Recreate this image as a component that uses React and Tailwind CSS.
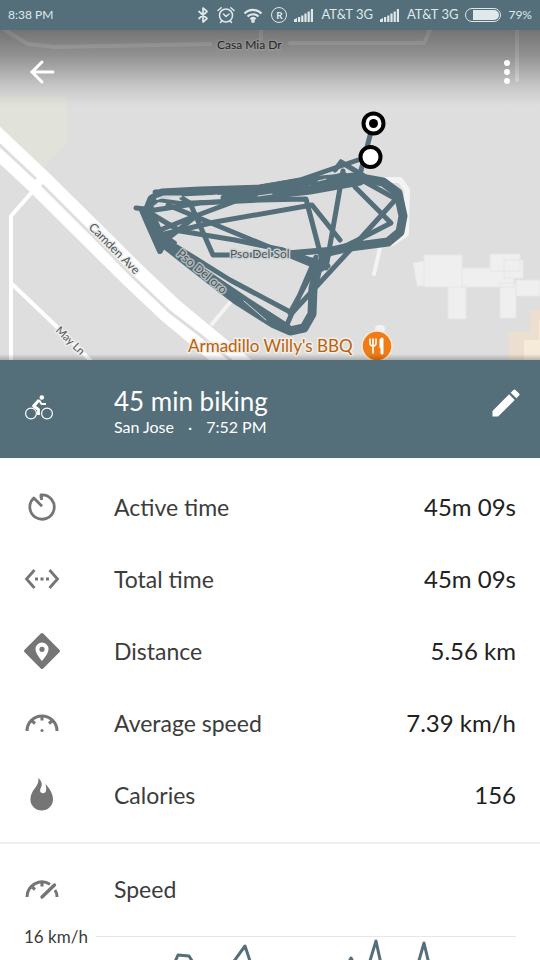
import React from "react";
import { MdEdit } from "react-icons/md";

function Signal() {
  return (
    <svg viewBox="0 0 20 14" className="h-[14px] w-5 shrink-0" fill="currentColor" aria-hidden="true">
      <path d="M0 14v-2.500l3-1.500v4zM4 14v-5h2.200v5zM7.200 14V7.500h2.200V14zM10.400 14V5.500h2.200V14zM13.600 14V3.500h2.200V14zM16.800 14V1H19v13z" />
    </svg>
  );
}

function StatusBar() {
  return (
    <header className="flex h-[30px] shrink-0 items-center justify-between bg-[#546e7a] px-2 text-[#dfe9ec]">
      <span className="text-xs">8:38 PM</span>
      <div className="flex items-center gap-[7px]">
        <div className="flex items-center gap-2">
          <svg viewBox="0 0 12 18" className="h-[18px] w-3" fill="none" stroke="currentColor" strokeWidth="1.700" strokeLinejoin="round" strokeLinecap="round" aria-hidden="true">
            <path d="M2 5.500 10 12.500 6 16V2l4 3.500L2 12.500" />
          </svg>
          <svg viewBox="0 0 18 18" className="size-[18px]" fill="none" stroke="currentColor" strokeWidth="1.500" strokeLinecap="round" aria-hidden="true">
            <circle cx="9" cy="9.500" r="6.500" />
            <path d="M1 4.500 4.200 1.800M17 4.500 13.800 1.800M6.500 8l2.500 2.500L12 8M4.800 15l-1.300 1.500M13.200 15l1.300 1.500" />
          </svg>
          <svg viewBox="0 0 20 16" className="h-4 w-5" fill="none" stroke="currentColor" strokeWidth="2.200" aria-hidden="true">
            <path d="M1.500 6.500a12 12 0 0 1 17 0M4.500 9.500a7.800 7.800 0 0 1 11 0M7.400 12.200a3.800 3.800 0 0 1 5.200 0" />
            <circle cx="10" cy="14" r=".8" fill="currentColor" />
          </svg>
          <span className="flex size-4 items-center justify-center rounded-full border border-current text-[10px] leading-none font-bold">R</span>
        </div>
        <Signal />
        <span className="text-[13px]">AT&amp;T 3G</span>
        <Signal />
        <span className="text-[13px]">AT&amp;T 3G</span>
        <span className="flex h-[14px] w-9 justify-end rounded-full border border-current p-px" role="img" aria-label="Battery">
          <span className="w-[26px] rounded-r-full bg-current" />
        </span>
        <span className="text-xs">79%</span>
      </div>
    </header>
  );
}

function RouteMap() {
  return (
    <svg viewBox="0 30 540 330" preserveAspectRatio="xMidYMid slice" className="h-full w-full" role="img" aria-label="Route map">
      <defs>
        <linearGradient id="shade" x1="0" y1="0" x2="0" y2="1">
          <stop offset="0" stopColor="#000" stopOpacity=".48" />
          <stop offset=".35" stopColor="#000" stopOpacity=".34" />
          <stop offset=".75" stopColor="#000" stopOpacity=".1" />
          <stop offset="1" stopColor="#000" stopOpacity="0" />
        </linearGradient>
        <linearGradient id="edge" x1="0" y1="0" x2="0" y2="1">
          <stop offset="0" stopColor="#000" stopOpacity="0" />
          <stop offset="1" stopColor="#000" stopOpacity=".22" />
        </linearGradient>
      </defs>
      <rect y="30" width="540" height="330" fill="#dedede" />
      <path d="M0 97h66v48l-22 22L0 128z" fill="#e1e2da" />

      <g fill="#efefef" stroke="#e6e6e6" strokeWidth="1">
        <path d="M413 263l12-2v25h-8z" />
        <path d="M448 286h18v33h-18zM500 283h16v35h-16zM462 268h52v19h-52zM516 280h24v16h-24z" />
        <path d="M424 255h38v32h-38zM490 254h30v17h-30zM504 260h19v18h-19z" />
      </g>
      <path d="M540 310h-10v22h-21v28h31z" fill="#ecdfd0" />
      <path d="M540 320h-1v20h-15v20h16z" fill="#f6ead8" />

      <g fill="none" stroke="#fff" strokeLinejoin="round">
        <path d="M-10 136 38 181 133 275 170 310 200 335 245 372" strokeWidth="27" />
        <path d="M32 192 11 216V365" strokeWidth="4" />
        <path d="M12 284 56 326 92 362" strokeWidth="4" />
      </g>
      <path d="M-10 136 36 179M42 185 96 239 133 277 170 312 200 335 240 368" fill="none" stroke="#dedede" strokeWidth="3" />
      <g fill="none" stroke="#f3f3f3" strokeLinecap="round">
        <path d="M232 300 212 324M380 248l-6 26" strokeWidth="4" />
        <path d="M372 180h28l7 10-1 44-14 9-32 2" strokeWidth="6" strokeLinejoin="round" />
        <path d="M379 329h2" strokeWidth="8" />
        <path d="M5 30 28 44 55 47 210 44M290 43h134l6-13M261 30v9M517 30v50" strokeWidth="4" />
      </g>

      <g fill="none" stroke="#546e7a" strokeLinejoin="round" strokeLinecap="round">
        <path d="M148 209 152 199 162 193 200 191 260 189 310 181 355 177 383 182 398 193 403 216 400 232 388 242 350 247 328 252 318 268 313 288 312 314 304 328 290 331 274 324 236 300 210 280 163 243z" strokeWidth="9" />
        <path d="M136 208 155 210 200 203 260 200 306 199 322 260" strokeWidth="5" />
        <path d="M225 198 250 197 310 190 360 181" strokeWidth="9" />
        <path d="M148 208 158 200 180 203 230 201" strokeWidth="4" />
        <path d="M155 192 250 189 300 180 358 160" strokeWidth="5" />
        <path d="M142 210 148 224 160 251 165 241" strokeWidth="6" />
        <path d="M146 212 152 224 165 236 175 243" strokeWidth="4" />
        <path d="M160 235 215 222 312 205 340 240" strokeWidth="5" />
        <path d="M182 198 190 203 213 255 265 255 325 251" strokeWidth="5" />
        <path d="M150 213 180 231 235 240 283 250 328 266" strokeWidth="5" />
        <path d="M168 205 175 208 240 235 322 269" strokeWidth="5" />
        <path d="M160 230 190 218 233 202M166 240 196 216" strokeWidth="5" />
        <path d="M177 247 230 280 292 313 350 250 396 199 360 179" strokeWidth="5" />
        <path d="M168 245 205 274 245 301 287 328" strokeWidth="9" />
        <path d="M355 178V187L391 223 350 244" strokeWidth="5" />
        <path d="M343 171 326 268 312 260M329 179 344 174M290 313 316 265M286 327 316 257" strokeWidth="5" />
        <path d="M341 162 364 176M341 162 335 170M373 124 358 182" strokeWidth="5" />
        <path d="M293 253 340 249 360 240" strokeWidth="6" />
      </g>
      <g fill="none" stroke="#d3dadd" strokeLinecap="round">
        <path d="M157 199 164 196.500 181 196.500" strokeWidth="2" />
        <path d="M154 206 162 205M205 196 217 195M258 196 272 194M318 181 326 179M244 301 266 320" strokeWidth="1" />
      </g>

      <g fontFamily="Lato, sans-serif" fontSize="12" fill="#555" stroke="#eee" strokeWidth="3" strokeLinejoin="round" paintOrder="stroke">
        <text x="217" y="49" fill="#444" stroke="#f0f0f0">Casa Mia Dr</text>
        <text x="230" y="258" stroke="#c8d0d3">Pso Del Sol</text>
        <text transform="translate(176 255) rotate(40)" stroke="#aebbc0">Pso Del oro</text>
        <text transform="translate(88 228) rotate(45)">Camden Ave</text>
        <text transform="translate(55 331) rotate(44)" fontSize="11">May Ln</text>
        <text x="188" y="352" fontSize="17" fill="#b8620f" stroke="#f4eee8">Armadillo Willy's BBQ</text>
      </g>

      <circle cx="377" cy="346" r="15" fill="#ef7c16" stroke="#fbe8d6" strokeWidth="1.500" />
      <g fill="none" stroke="#fff" strokeWidth="1.600" strokeLinecap="round">
        <path d="M370 339v4q0 3 3 3t3-3v-4M373 339v14" />
        <path d="M382 339v14M381 340v7" strokeWidth="3" />
      </g>
      <circle cx="370.500" cy="157" r="10" fill="#fff" stroke="#000" strokeWidth="4" />
      <circle cx="373.500" cy="123.500" r="10" fill="#fff" stroke="#000" strokeWidth="4" />
      <circle cx="373.500" cy="123.500" r="4.500" />

      <rect y="30" width="540" height="76" fill="url(#shade)" />
      <rect y="354" width="540" height="6" fill="url(#edge)" />
    </svg>
  );
}

function BikeIcon() {
  return (
    <svg viewBox="0 0 36 36" className="size-9" fill="none" stroke="currentColor" aria-hidden="true">
      <circle cx="7" cy="22.500" r="5.400" strokeWidth="1.200" />
      <circle cx="23" cy="22.500" r="5.400" strokeWidth="1.200" />
      <circle cx="17.800" cy="6.500" r="2.300" fill="currentColor" stroke="none" />
      <path d="m15 9-5.500 6 5 3.500v5.500" strokeWidth="2.800" strokeLinejoin="round" />
      <path d="m15 9 2.500 4H22M10 16l3-4" strokeWidth="2" strokeLinejoin="round" />
    </svg>
  );
}

function TimerIcon() {
  return (
    <svg viewBox="0 0 36 36" className="size-9" fill="none" stroke="currentColor" strokeWidth="2.800" aria-hidden="true">
      <path d="M17 9V5.800h1A12.200 12.200 0 1 1 9.800 9L18 17.200M17.500 5.800V11" strokeLinejoin="round" />
    </svg>
  );
}

function SpanIcon() {
  return (
    <svg viewBox="0 0 36 36" className="size-9" fill="none" stroke="currentColor" strokeWidth="2.800" aria-hidden="true">
      <path d="m10.500 9-8 9 8 9M25.500 9l8 9-8 9" />
      <path d="M11 18h3M16.500 18h3M22 18h3" strokeWidth="3" />
    </svg>
  );
}

function DistanceIcon() {
  return (
    <svg viewBox="0 0 36 36" className="size-9" fill="currentColor" fillRule="evenodd" aria-hidden="true">
      <path d="M18 0q.6 0 1.200.6l16.200 16.200q1.200 1.200 0 2.400L19.200 35.400q-1.200 1.200-2.400 0L.6 19.200q-1.200-1.200 0-2.400L16.800.6Q17.400 0 18 0zm0 9.500a6.500 6.500 0 0 0-6.500 6.500c0 4.800 6.500 12 6.500 12s6.500-7.200 6.500-12A6.500 6.500 0 0 0 18 9.500zm0 4.200a2.600 2.600 0 1 1 0 5.200 2.600 2.600 0 0 1 0-5.200z" />
    </svg>
  );
}

function GaugeIcon() {
  return (
    <svg viewBox="0 0 36 36" className="size-9" fill="none" stroke="currentColor" strokeWidth="3" aria-hidden="true">
      <path d="M3 26a15 15 0 0 1 30 0" />
      <path d="M18 11v4.500M7.500 15.500l3.500 3M28.500 15.500l-3.500 3" />
      <circle cx="18" cy="25.500" r="1.500" fill="currentColor" stroke="none" />
    </svg>
  );
}

function FlameIcon() {
  return (
    <svg viewBox="0 0 36 36" className="size-9" fill="currentColor" aria-hidden="true">
      <path d="M14.200 1c3.200 2.500 4.400 6.200 3 9-1.600 3-1.600 6 1.700 6.300 3.600.2 4-4.300 2.500-9.300 3.900 3.800 7.600 9.500 7.600 15.200a11.300 11.300 0 0 1-22.600 0c0-4.400 2-8 5-11.800 2.500-3.200 3.600-6.200 2.800-9.400z" />
    </svg>
  );
}

function SpeedIcon() {
  return (
    <svg viewBox="0 0 36 36" className="size-9" fill="none" stroke="currentColor" strokeWidth="3" aria-hidden="true">
      <path d="M3 26a15 15 0 0 1 23-12.700M31 19q2 3 2 7M18 11v4.500M7.500 15.500l3.500 3" />
      <path d="M18 26 30.500 14" strokeWidth="3.400" strokeLinecap="round" />
    </svg>
  );
}

const stats = [
  { label: "Active time", value: "45m 09s", Icon: TimerIcon },
  { label: "Total time", value: "45m 09s", Icon: SpanIcon },
  { label: "Distance", value: "5.56 km", Icon: DistanceIcon },
  { label: "Average speed", value: "7.39 km/h", Icon: GaugeIcon },
  { label: "Calories", value: "156", Icon: FlameIcon },
];

export default function App() {
  return (
    <div className="flex h-screen flex-col overflow-hidden bg-white font-['Lato',sans-serif] text-[#3c3c3c]">
      <StatusBar />
      <div className="relative h-[330px] shrink-0 overflow-hidden">
        <RouteMap />
        <div className="absolute inset-x-0 top-0 flex items-center justify-between pt-6 pr-5 pl-6 text-white">
          <button type="button" aria-label="Back" className="flex size-9 items-center justify-center">
            <svg viewBox="0 0 36 36" className="size-9" fill="none" stroke="currentColor" strokeWidth="3" strokeLinecap="round" aria-hidden="true">
              <path d="M18 8 8 18l10 10M8.500 18H29" />
            </svg>
          </button>
          <button type="button" aria-label="More options" className="flex h-9 w-6 items-center justify-center">
            <svg viewBox="0 0 8 26" className="h-[26px] w-2" fill="currentColor" aria-hidden="true">
              <circle cx="3" cy="4" r="3" />
              <circle cx="3" cy="13" r="3" />
              <circle cx="3" cy="22" r="3" />
            </svg>
          </button>
        </div>
      </div>

      <section className="flex h-[98px] shrink-0 items-center bg-[#546e7a] px-6 text-white">
        <div className="w-[90px] shrink-0">
          <BikeIcon />
        </div>
        <div className="flex-1 pt-1">
          <h1 className="text-[26px] leading-8">45 min biking</h1>
          <p className="flex gap-[14px] text-base leading-5">
            <span>San Jose</span>
            <span>·</span>
            <span>7:52 PM</span>
          </p>
        </div>
        <button type="button" aria-label="Edit activity" className="-mr-2 mb-3">
          <MdEdit className="size-9" />
        </button>
      </section>

      <dl className="shrink-0 border-b-2 border-[#eeeeee] pt-[13px] pb-[11px]">
        {stats.map(({ label, value, Icon }) => (
          <div key={label} className="flex h-[72px] items-center px-6">
            <dt className="flex flex-1 items-center text-[23px]">
              <span className="w-[90px] text-[#757575]">
                <Icon />
              </span>
              {label}
            </dt>
            <dd className="text-2xl text-[#212121]">{value}</dd>
          </div>
        ))}
      </dl>

      <section className="min-h-0 flex-1 overflow-hidden pt-[9px]">
        <h2 className="flex h-[72px] items-center px-6 text-[23px]">
          <span className="w-[90px] text-[#757575]">
            <SpeedIcon />
          </span>
          Speed
        </h2>
        <div className="flex items-start gap-1 px-6">
          <span className="w-[68px] shrink-0 text-[17px] leading-6">16 km/h</span>
          <svg viewBox="96 925 420 36" className="min-w-0 flex-1" fill="none" aria-hidden="true">
            <path d="M96 936.500H516" stroke="#e6e6e6" />
            <path d="M174 964 178 955 189 956 194 964M232 964 245 946 251 964M347 966 351 958 355 966M369 964 376 941 381 964M418 964 424 943 429 964" stroke="#546e7a" strokeWidth="3" strokeLinejoin="round" />
          </svg>
        </div>
      </section>
    </div>
  );
}
